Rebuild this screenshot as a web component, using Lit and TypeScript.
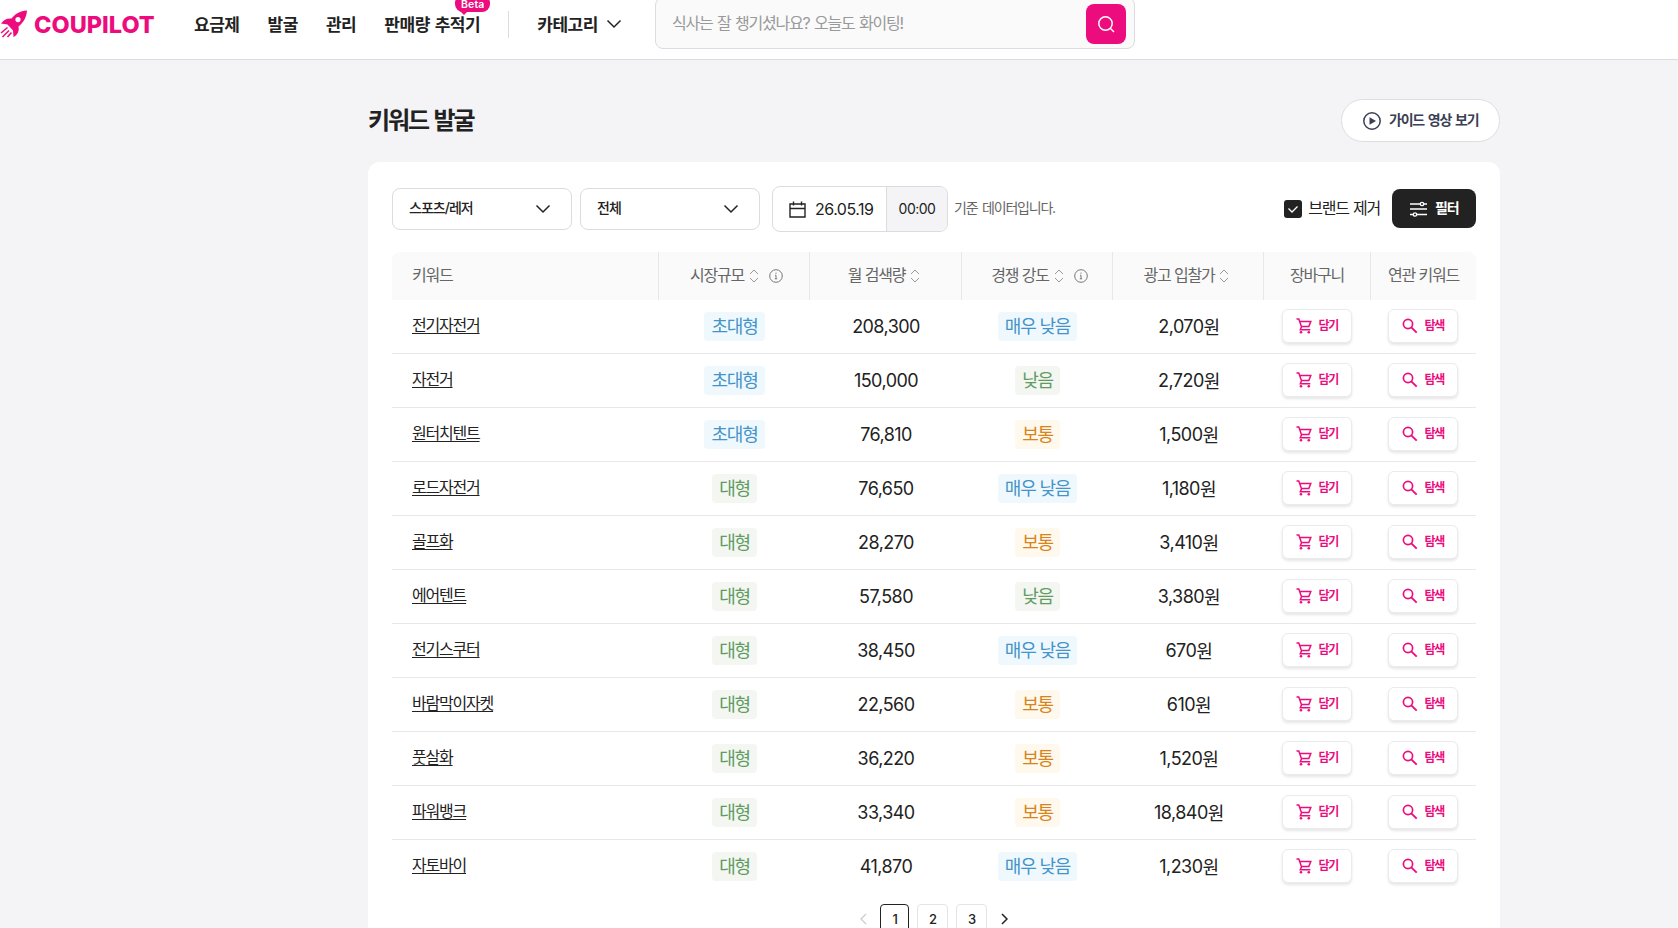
import { LitElement, html, css } from "lit";
import { customElement } from "lit/decorators.js";
import { classMap } from "lit/directives/class-map.js";

type Row = [string, string, string, string, string];

const ROWS: Row[] = [
  ["전기자전거", "초대형", "208,300", "매우 낮음", "2,070"],
  ["자전거", "초대형", "150,000", "낮음", "2,720"],
  ["원터치텐트", "초대형", "76,810", "보통", "1,500"],
  ["로드자전거", "대형", "76,650", "매우 낮음", "1,180"],
  ["골프화", "대형", "28,270", "보통", "3,410"],
  ["에어텐트", "대형", "57,580", "낮음", "3,380"],
  ["전기스쿠터", "대형", "38,450", "매우 낮음", "670"],
  ["바람막이자켓", "대형", "22,560", "보통", "610"],
  ["풋살화", "대형", "36,220", "보통", "1,520"],
  ["파워뱅크", "대형", "33,340", "보통", "18,840"],
  ["자토바이", "대형", "41,870", "매우 낮음", "1,230"],
];

const chevron = html`<svg class="chev" width="16" height="10" viewBox="0 0 16 10"><path d="M1.5 1.5 8 8l6.5-6.5" fill="none" stroke="#222" stroke-width="1.5"/></svg>`;
const sorter = html`<svg class="sorter" width="10" height="14" viewBox="0 0 10 14"><path d="M1 5 5 1l4 4M1 9l4 4 4-4" fill="none" stroke="#999" stroke-width="1"/></svg>`;
const info = html`<svg class="info" width="14" height="14" viewBox="0 0 14 14"><circle cx="7" cy="7" r="6.3" fill="none" stroke="#777" stroke-width="1"/><path d="M7 3.6v1.2M6 6.3h1v3.4M5.8 9.8h2.400" fill="none" stroke="#777" stroke-width="1"/></svg>`;
const cart = html`<svg width="16" height="16" viewBox="0 0 16 16"><path d="M.5 1h2.300l2.600 7.600h7.400l2-5.200H3.600M5.600 8.600 4.300 11.800h10" fill="none" stroke="#ec0c7d" stroke-width="1.500"/><circle cx="5" cy="14.300" r="1.300" fill="#ec0c7d"/><circle cx="12.800" cy="14.300" r="1.300" fill="#ec0c7d"/></svg>`;
const lens = html`<svg width="16" height="16" viewBox="0 0 16 16"><circle cx="6" cy="6" r="4.600" fill="none" stroke="#ec0c7d" stroke-width="1.700"/><path d="m9.300 9.300 5.400 5.400" stroke="#ec0c7d" stroke-width="1.900"/></svg>`;

@customElement("app-root")
export class AppRoot extends LitElement {
  static styles = css`
    :host { display: block; height: 928px; overflow: hidden; background: #f4f4f6; color: #222;
      font-family: Inter, "Noto Sans CJK KR", sans-serif; letter-spacing: -0.0755em; }
    * { box-sizing: border-box; }
    svg { display: block; flex: none; }
    .top { height: 60px; background: #fff; border-bottom: 1px solid #dcdcdf; display: flex; align-items: flex-start; }
    .logo { display: flex; width: 194px; height: 48px; align-items: center; color: #ec0c7d; }
    .brand { font-size: 23.5px; font-weight: 800; letter-spacing: 0; margin-left: 6px; line-height: 50px; padding-top: 1px; }
    .nav { display: flex; height: 50px; align-items: center; gap: 28px; font-size: 17px; font-weight: 600; line-height: 50px; white-space: nowrap; letter-spacing: -0.027em; word-spacing: 1px; }
    .tracker { position: relative; }
    .beta { position: absolute; right: -10px; top: -5px; width: 35px; height: 17px; border-radius: 8px; background: #ec0c7d;
      color: #fff; font-size: 10.5px; font-weight: 600; line-height: 19px; text-align: center; letter-spacing: 0.1px; }
    .beta::after { content: ""; position: absolute; left: 5px; top: 16px; border: 4px solid transparent; border-top-color: #ec0c7d; border-bottom: 0; }
    .rule { width: 1px; height: 27px; margin: 11px 28px 0 28px; background: #dcdcdf; }
    .cat { display: flex; height: 48px; align-items: center; gap: 8px; font-size: 17px; font-weight: 600; letter-spacing: -0.027em; }
    .cat span { line-height: 24px; margin-bottom: -1px; }
    .search { display: flex; justify-content: space-between; margin: -3px 0 0 33px; width: 480px; height: 52px; padding: 6px 8px 4px 16px;
      border: 1px solid #dcdcdf; border-radius: 8px; background: #fafafa; }
    .hint { font-size: 16px; line-height: 39px; color: #999; word-spacing: 1.2px; }
    .go { display: flex; align-items: center; justify-content: center; width: 40px; height: 40px; border-radius: 8px; background: #ec0c7d; }
    .page { width: 1132px; margin: 0 0 0 368px; }
    .head { display: flex; justify-content: space-between; align-items: center; height: 102px; padding-top: 19px; }
    h1 { margin: 0; font-size: 24px; font-weight: 700; line-height: 36px; letter-spacing: -0.088em; word-spacing: 2px; }
    .guide { display: flex; align-items: center; gap: 8px; width: 159px; height: 43px; padding-left: 21px; border: 1px solid #dedee1; border-radius: 22px;
      background: #fff; color: #3b3f55; font-size: 14px; font-weight: 600; word-spacing: 1.5px; }
    .t { margin-bottom: 3px; }
    .card { height: 800px; padding: 24px; border-radius: 12px; background: #fff; }
    .bar { display: flex; align-items: center; height: 46px; }
    .select { display: flex; align-items: center; justify-content: space-between; width: 180px; height: 42px; margin-right: 8px; padding: 0 20px 0 16px;
      border: 1px solid #dcdcdf; border-radius: 8px; font-size: 14px; font-weight: 500; letter-spacing: -0.07em; }
    .select .t { margin-bottom: 4px; }
    .date { display: flex; width: 176px; height: 46px; margin-left: 4px; border: 1px solid #dcdcdf; border-radius: 8px; overflow: hidden; line-height: 43px; letter-spacing: -0.5px; }
    .day { display: flex; align-items: center; gap: 9px; width: 114px; padding-left: 16px; border-right: 1px solid #dcdcdf; font-size: 16px; }
    .hour { flex: 1; background: #f4f4f6; font-size: 14px; text-align: center; }
    .note { margin: 0 0 4px 6px; font-size: 14px; color: #666; word-spacing: 2px; }
    .push { margin-left: auto; display: flex; align-items: center; }
    .check { width: 18px; height: 18px; border-radius: 3px; background: #222; margin-right: 6px; }
    .label { font-size: 16px; margin-bottom: 4px; word-spacing: 1px; }
    .filter { display: flex; align-items: center; gap: 8px; width: 84px; height: 39px; margin: 0 0 1px 12px; padding-left: 18px; border-radius: 8px; background: #222; color: #fff; font-size: 14px; font-weight: 600; }
    .row { display: grid; grid-template-columns: 267px 151px 152px 151px 151px 107px 105px; height: 54px; border-bottom: 1px solid #e8e8ea; }
    .row.last { border-bottom-color: transparent; }
    .thead { height: 48px; margin-top: 20px; border: 0; border-radius: 8px 8px 0 0; background: #fafafa; color: #666; font-size: 16px; }
    .cell { display: flex; align-items: center; justify-content: center; }
    .cell.first { justify-content: flex-start; padding-left: 20px; }
    .cell.act { padding: 0 2px 1px 0; }
    .thead .cell { border-right: 1px solid #e8e8ea; line-height: 24px; padding-bottom: 2px; }
    .thead .cell:last-child { border: 0; }
    .thead .cell.wide { padding-left: 5px; }
    .sorter { margin: 2px 3px 0 5px; }
    .info { margin: 2px 0 0 7px; }
    .kw { display: block; font-size: 16px; line-height: 24px; text-decoration: underline; text-underline-offset: 2px; margin-bottom: 4px; }
    .num { font-size: 18px; letter-spacing: -0.031em; }
    .won { letter-spacing: -0.0755em; margin-bottom: 2px; }
    .badge { height: 29px; padding: 0 7.5px; border-radius: 4px; font-size: 18px; line-height: 30px; }
    .badge.blue { padding: 0 7px; }
    .blue { background: #eff9fd; color: #4493c9; }
    .green { background: #f3f6f1; color: #5f9b62; }
    .orange { background: #fff8ec; color: #d6841c; }
    .btn { display: flex; align-items: center; gap: 7px; width: 70px; height: 34px; padding-left: 13px; border: 1px solid #ebebed; border-radius: 6px;
      background: #fff; box-shadow: 0 2px 3px rgba(0,0,0,.1); color: #ec0c7d; font-size: 12px; font-weight: 700; }
    .pager { display: flex; align-items: center; padding: 10px 0 0 468px; font-size: 13px; font-weight: 500; }
    .pg { width: 31px; height: 30px; border: 1px solid #e4e4e6; border-radius: 4px; line-height: 28px; text-align: center; margin-right: 8px; }
    .pg.on { width: 29px; border-color: #222; }
    .prev { margin-right: 13px; }
    .next { margin-left: 6px; }
  `;

  private tone(label: string) {
    const blue = label === "초대형" || label === "매우 낮음";
    const orange = label === "보통";
    return classMap({ badge: true, blue, orange, green: !blue && !orange });
  }

  render() {
    return html`
      <header class="top">
        <div class="logo">
          <svg width="28" height="28" viewBox="0 0 28 28"><path fill="#ec0c7d" fill-rule="evenodd" d="M27 .5C20 1 15 4 11.500 8.500 7 8 3.500 10 1 13.500L7.500 14.500 13 20.500 13.500 27c4-2 6-6 5-10.500 5-4 8-9 8.500-16ZM18 7a2.600 2.600 0 1 1 0 5.200A2.600 2.600 0 0 1 18 7Z"/><path d="M7.500 17.500 1 23M9 20.500 2.500 27M11.500 22.500l-4 4.500" stroke="#ec0c7d" stroke-width="1.500"/></svg>
          <span class="brand">COUPILOT</span>
        </div>
        <nav class="nav"><span>요금제</span><span>발굴</span><span>관리</span><span class="tracker">판매량 추적기<span class="beta">Beta</span></span></nav>
        <div class="rule"></div>
        <div class="cat"><span>카테고리</span>${chevron}</div>
        <div class="search"><span class="hint">식사는 잘 챙기셨나요? 오늘도 화이팅!</span>
          <div class="go"><svg width="18" height="18" viewBox="0 0 18 18"><circle cx="8.500" cy="8.500" r="6.700" fill="none" stroke="#fff" stroke-width="1.500"/><path d="m13 13 4 4" stroke="#fff" stroke-width="1.500"/></svg></div>
        </div>
      </header>
      <main class="page">
        <div class="head"><h1>키워드 발굴</h1>
          <div class="guide"><svg width="18" height="18" viewBox="0 0 18 18"><circle cx="9" cy="9" r="8.200" fill="none" stroke="#3b3f55" stroke-width="1.500"/><path d="M6.500 5.300v7.400L13 9Z" fill="#3b3f55"/></svg><span class="t">가이드 영상 보기</span></div>
        </div>
        <section class="card">
          <div class="bar">
            <div class="select"><span class="t">스포츠/레저</span>${chevron}</div>
            <div class="select"><span class="t">전체</span>${chevron}</div>
            <div class="date">
              <div class="day"><svg width="17" height="17" viewBox="0 0 17 17"><path d="M1 3h15v13H1ZM1 7.500h15M4.500.5v4M12.500.5v4" fill="none" stroke="#222" stroke-width="1.400"/></svg>26.05.19</div>
              <div class="hour">00:00</div>
            </div>
            <span class="note">기준 데이터입니다.</span>
            <div class="push">
              <div class="check"><svg width="18" height="18" viewBox="0 0 18 18"><path d="m4.500 8.500 3.500 3.500 5.500-5.500" fill="none" stroke="#fff" stroke-width="1.300"/></svg></div>
              <span class="label">브랜드 제거</span>
              <div class="filter"><svg width="17" height="16" viewBox="0 0 17 16"><path d="M0 3h10M14 3h3M0 8h17M0 13.500h3M7 13.500h10" stroke="#fff" stroke-width="1.400"/><circle cx="12" cy="3" r="1.700" fill="none" stroke="#fff" stroke-width="1.300"/><circle cx="5" cy="13.500" r="1.700" fill="none" stroke="#fff" stroke-width="1.300"/></svg><span class="t">필터</span></div>
            </div>
          </div>
          <div class="row thead">
            <div class="cell first">키워드</div><div class="cell wide">시장규모${sorter}${info}</div><div class="cell">월 검색량${sorter}</div>
            <div class="cell wide">경쟁 강도${sorter}${info}</div><div class="cell">광고 입찰가${sorter}</div><div class="cell">장바구니</div><div class="cell">연관 키워드</div>
          </div>
          ${ROWS.map((r, i) => html`<div class=${classMap({ row: true, last: i === ROWS.length - 1 })}>
            <div class="cell first"><span class="kw">${r[0]}</span></div>
            <div class="cell"><span class=${this.tone(r[1])}>${r[1]}</span></div>
            <div class="cell num">${r[2]}</div>
            <div class="cell"><span class=${this.tone(r[3])}>${r[3]}</span></div>
            <div class="cell num">${r[4]}<span class="won">원</span></div>
            <div class="cell act"><div class="btn">${cart}<span class="t">담기</span></div></div>
            <div class="cell act"><div class="btn">${lens}<span class="t">탐색</span></div></div>
          </div>`)}
          <div class="pager">
            <svg class="prev" width="7" height="12" viewBox="0 0 7 12"><path d="M6 1 1 6l5 5" fill="none" stroke="#ccc" stroke-width="1.200"/></svg>
            <span class="pg on">1</span><span class="pg">2</span><span class="pg">3</span>
            <svg class="next" width="7" height="12" viewBox="0 0 7 12"><path d="m1 1 5 5-5 5" fill="none" stroke="#222" stroke-width="1.500"/></svg>
          </div>
        </section>
      </main>`;
  }
}
